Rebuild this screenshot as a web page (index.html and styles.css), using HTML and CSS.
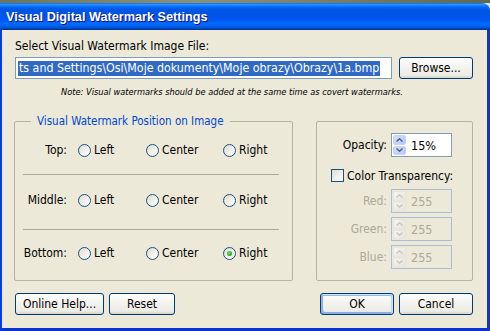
FILE: index.html
```html
<!DOCTYPE html>
<html lang="en">
<head>
    <meta charset="UTF-8">
    <meta name="viewport" content="width=device-width, initial-scale=1.0">
    <title>Visual Digital Watermark Settings</title>
    <link rel="stylesheet" href="styles.css">
</head>
<body>
    <div class="window">
        <div class="titlebar">
            <span class="title">Visual Digital Watermark Settings</span>
        </div>

        <div class="client">
            <div class="file-label">Select Visual Watermark Image File:</div>

            <div class="file-row">
                <div class="textbox">
                    <span class="selected">ts and Settings\Osi\Moje dokumenty\Moje obrazy\Obrazy\1a.bmp</span>
                </div>
                <button class="btn btn-browse">Browse...</button>
            </div>

            <p class="note">Note: Visual watermarks should be added at the same time as covert watermarks.</p>

            <div class="groups">
                <fieldset class="pos-group">
                    <legend>Visual Watermark Position on Image</legend>

                    <div class="pos-row row-top">
                        <span class="row-label">Top:</span>
                        <label class="opt opt-left"><span class="radio"></span>Left</label>
                        <label class="opt opt-center"><span class="radio"></span>Center</label>
                        <label class="opt"><span class="radio"></span>Right</label>
                    </div>
                    <div class="sep sep-1"></div>
                    <div class="pos-row row-middle">
                        <span class="row-label">Middle:</span>
                        <label class="opt opt-left"><span class="radio"></span>Left</label>
                        <label class="opt opt-center"><span class="radio"></span>Center</label>
                        <label class="opt"><span class="radio"></span>Right</label>
                    </div>
                    <div class="sep sep-2"></div>
                    <div class="pos-row row-bottom">
                        <span class="row-label">Bottom:</span>
                        <label class="opt opt-left"><span class="radio"></span>Left</label>
                        <label class="opt opt-center"><span class="radio"></span>Center</label>
                        <label class="opt"><span class="radio checked"></span>Right</label>
                    </div>
                </fieldset>

                <div class="opts-group">
                    <div class="spin-row row-opacity">
                        <span class="spin-label">Opacity:</span>
                        <div class="spinner">
                            <div class="spin-btns">
                                <span class="spin-up"><svg width="7" height="4" viewBox="0 0 7 4"><polyline points="0.5,3.5 3.5,0.8 6.5,3.5" fill="none" stroke="#4d6185" stroke-width="1.4"/></svg></span>
                                <span class="spin-down"><svg width="7" height="4" viewBox="0 0 7 4"><polyline points="0.5,0.5 3.5,3.2 6.5,0.5" fill="none" stroke="#4d6185" stroke-width="1.4"/></svg></span>
                            </div>
                            <span class="spin-value">15%</span>
                        </div>
                    </div>

                    <label class="check-row">
                        <span class="checkbox"></span>Color Transparency:
                    </label>

                    <div class="spin-row disabled row-red">
                        <span class="spin-label">Red:</span>
                        <div class="spinner">
                            <div class="spin-btns">
                                <span class="spin-up"><svg width="7" height="4" viewBox="0 0 7 4"><polyline points="0.5,3.5 3.5,0.8 6.5,3.5" fill="none" stroke="#c9c7ba" stroke-width="1.4"/></svg></span>
                                <span class="spin-down"><svg width="7" height="4" viewBox="0 0 7 4"><polyline points="0.5,0.5 3.5,3.2 6.5,0.5" fill="none" stroke="#c9c7ba" stroke-width="1.4"/></svg></span>
                            </div>
                            <span class="spin-value">255</span>
                        </div>
                    </div>
                    <div class="spin-row disabled">
                        <span class="spin-label">Green:</span>
                        <div class="spinner">
                            <div class="spin-btns">
                                <span class="spin-up"><svg width="7" height="4" viewBox="0 0 7 4"><polyline points="0.5,3.5 3.5,0.8 6.5,3.5" fill="none" stroke="#c9c7ba" stroke-width="1.4"/></svg></span>
                                <span class="spin-down"><svg width="7" height="4" viewBox="0 0 7 4"><polyline points="0.5,0.5 3.5,3.2 6.5,0.5" fill="none" stroke="#c9c7ba" stroke-width="1.4"/></svg></span>
                            </div>
                            <span class="spin-value">255</span>
                        </div>
                    </div>
                    <div class="spin-row disabled">
                        <span class="spin-label">Blue:</span>
                        <div class="spinner">
                            <div class="spin-btns">
                                <span class="spin-up"><svg width="7" height="4" viewBox="0 0 7 4"><polyline points="0.5,3.5 3.5,0.8 6.5,3.5" fill="none" stroke="#c9c7ba" stroke-width="1.4"/></svg></span>
                                <span class="spin-down"><svg width="7" height="4" viewBox="0 0 7 4"><polyline points="0.5,0.5 3.5,3.2 6.5,0.5" fill="none" stroke="#c9c7ba" stroke-width="1.4"/></svg></span>
                            </div>
                            <span class="spin-value">255</span>
                        </div>
                    </div>
                </div>
            </div>

            <div class="buttons">
                <div class="btn-group">
                    <button class="btn btn-help">Online Help...</button>
                    <button class="btn btn-reset">Reset</button>
                </div>
                <div class="btn-group">
                    <button class="btn btn-default">OK</button>
                    <button class="btn">Cancel</button>
                </div>
            </div>
        </div>
    </div>
</body>
</html>
```

FILE: styles.css
```css
* {
    margin: 0;
    padding: 0;
    box-sizing: border-box;
}

body {
    padding-top: 3px;
    background: linear-gradient(90deg, #6e7658, #8c9274 40%, #5f6a4c) no-repeat 0 0 / 100% 3px, #e2e2da;
    font-family: "DejaVu Sans Condensed", "DejaVu Sans", sans-serif;
    font-size: 12px;
    color: #000;
}

.window {
    width: 490px;
    display: flex;
    flex-direction: column;
}

/* Barra del titolo stile Luna */
.titlebar {
    height: 27px;
    border-radius: 0 8px 0 0;
    background: linear-gradient(to bottom, #0058ee 0%, #3593ff 4%, #288eff 7%, #127dff 10%, #036ffc 14%, #0262ee 18%, #0057e5 24%, #0054e3 30%, #0055eb 56%, #005bf5 66%, #026afe 76%, #0062ef 86%, #0052d6 92%, #0040ab 96%, #003092 100%);
    display: flex;
    align-items: center;
    padding-left: 6px;
}

.title {
    color: #fff;
    font-family: "Liberation Sans", Arial, sans-serif;
    font-weight: bold;
    font-size: 12.7px;
    text-shadow: 1px 1px #0f1089;
    margin-top: 1px;
}

.client {
    height: 301px;
    background-color: #ece9d8;
    border-left: 2px solid #0b3dd8;
    border-right: 3px solid #0a37d0;
    border-bottom: 3px solid #0a35cc;
    padding: 10px 14px 0 13px;
}

.file-label {
    line-height: 13px;
    height: 13px;
}

.file-row {
    margin-top: 4px;
    display: flex;
    gap: 7px;
}

.textbox {
    width: 377px;
    height: 22px;
    border: 1px solid #7f9db9;
    background-color: #fff;
    display: flex;
    align-items: center;
    padding-left: 2px;
    overflow: hidden;
    white-space: nowrap;
}

.selected {
    background-color: #316ac5;
    color: #fff;
    font-size: 12.3px;
    line-height: 15px;
    padding: 0 1px;
}

.btn {
    height: 22px;
    border: 1px solid #003c74;
    border-radius: 3px;
    background: linear-gradient(to bottom, #fff 0%, #f4f4f0 40%, #ecebe6 86%, #d6d0c5 100%);
    font-family: inherit;
    font-size: 12px;
    color: #000;
}

.btn-browse {
    width: 74px;
}

.note {
    margin-top: 6px;
    height: 13px;
    line-height: 13px;
    padding-left: 46px;
    font-style: italic;
    font-size: 9.2px;
}

.groups {
    margin-top: 17px;
    margin-left: -1px;
    display: flex;
    justify-content: space-between;
    align-items: flex-start;
}

.pos-group {
    width: 279px;
    border: 1px solid #b5b2a2;
    border-radius: 2px;
    padding: 0 0 15px 0;
    min-inline-size: 0;
}

.pos-group legend {
    margin-left: 16px;
    padding: 0 6px;
    line-height: 13px;
    font-size: 11.5px;
    color: #0046d5;
}

.pos-row {
    height: 24px;
    display: flex;
    align-items: center;
}

.row-top {
    margin-top: 10px;
}

.row-middle {
    margin-top: 13px;
}

.row-bottom {
    margin-top: 11px;
}

.row-label {
    width: 52px;
    text-align: right;
    margin-right: 11px;
}

.opt {
    display: flex;
    align-items: center;
    gap: 3px;
}

.opt-left {
    width: 68px;
}

.opt-center {
    width: 77px;
}

.radio {
    width: 13px;
    height: 13px;
    border: 1px solid #1c5180;
    border-radius: 50%;
    background: linear-gradient(135deg, #dcd9ce 0%, #f4f3ee 60%, #fff 100%);
    display: flex;
    align-items: center;
    justify-content: center;
}

.radio.checked::after {
    content: "";
    width: 5px;
    height: 5px;
    border-radius: 50%;
    background: radial-gradient(circle at 40% 40%, #6be36a, #21a121 70%);
}

.sep {
    height: 1px;
    background-color: #aca899;
    margin: 0 13px 0 8px;
}

.sep-1 {
    margin-top: 12px;
}

.sep-2 {
    margin-top: 17px;
}

.opts-group {
    width: 157px;
    height: 160px;
    margin-top: 6px;
    border: 1px solid #b5b2a2;
    border-radius: 2px;
    padding-top: 11px;
}

.spin-row {
    height: 24px;
    display: flex;
    align-items: center;
    gap: 4px;
}

.spin-label {
    width: 70px;
    text-align: right;
}

.spinner {
    width: 61px;
    height: 24px;
    border: 1px solid #7f9db9;
    background-color: #fff;
    display: flex;
    align-items: center;
    padding: 1px;
}

.spin-btns {
    width: 13px;
    height: 20px;
    display: flex;
    flex-direction: column;
    gap: 1px;
}

.spin-btns span {
    flex: 1;
    border-radius: 2px;
    background: linear-gradient(135deg, #d4e1fd, #b4c7f5);
    border: 1px solid #c4d3f7;
    display: flex;
    align-items: center;
    justify-content: center;
}

.spin-value {
    margin-left: 5px;
    font-size: 12.5px;
}

.check-row {
    margin: 12px 0 7px 14px;
    height: 13px;
    display: flex;
    align-items: center;
    gap: 3px;
}

.checkbox {
    width: 13px;
    height: 13px;
    border: 1px solid #1c5180;
    background: linear-gradient(135deg, #dcdcd7 0%, #f2f2ee 60%, #fff 100%);
}

.row-red ~ .spin-row {
    margin-top: 4px;
}

.disabled {
    color: #aca899;
}

.disabled .spinner {
    border-color: #a9bdd4;
    background-color: #ece9d8;
}

.disabled .spin-btns span {
    background: linear-gradient(135deg, #f7f7f4, #e4e3dc);
    border-color: #e6e4dc;
}

.buttons {
    margin-top: 12px;
    display: flex;
    justify-content: space-between;
}

.btn-group {
    display: flex;
    gap: 5px;
}

.btn-help {
    width: 89px;
}

.btn-reset {
    width: 66px;
}

.btn-group .btn-default,
.btn-group .btn-default + .btn {
    width: 74px;
}

.btn-default {
    box-shadow: inset -1px 1px #cee7ff, inset 1px 2px #98b8ea, inset -2px 2px #bcd4f6, inset 1px -1px #89ade4, inset 2px -2px #89ade4;
}
```
